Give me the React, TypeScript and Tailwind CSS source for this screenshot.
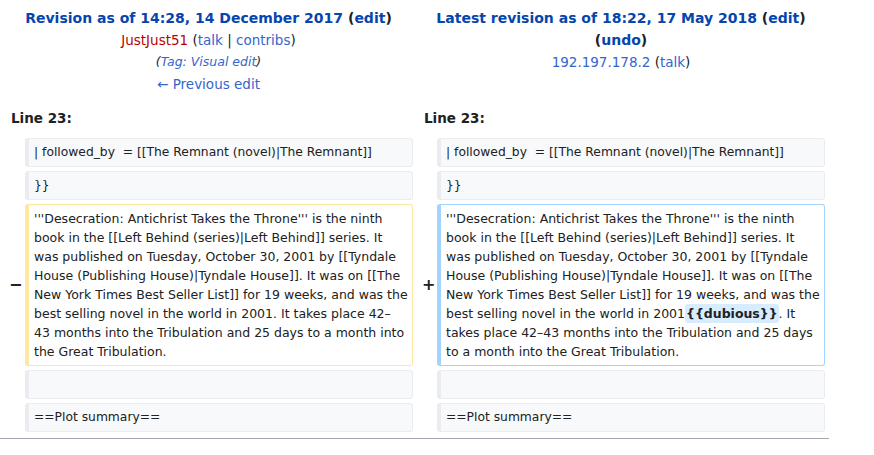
import React from 'react';

const font = { fontFamily: '"DejaVu Sans", sans-serif' };

const oldLines = [
  "'''Desecration: Antichrist Takes the Throne''' is the ninth",
  'book in the [[Left Behind (series)|Left Behind]] series. It',
  'was published on Tuesday, October 30, 2001 by [[Tyndale',
  'House (Publishing House)|Tyndale House]]. It was on [[The',
  'New York Times Best Seller List]] for 19 weeks, and was the',
  'best selling novel in the world in 2001. It takes place 42–',
  '43 months into the Tribulation and 25 days to a month into',
  'the Great Tribulation.',
];

const newLines: React.ReactNode[] = [
  "'''Desecration: Antichrist Takes the Throne''' is the ninth",
  'book in the [[Left Behind (series)|Left Behind]] series. It',
  'was published on Tuesday, October 30, 2001 by [[Tyndale',
  'House (Publishing House)|Tyndale House]]. It was on [[The',
  'New York Times Best Seller List]] for 19 weeks, and was the',
  <>
    best selling novel in the world in 2001
    <span className="bg-[#d8ecff] font-bold rounded-[3px] px-px py-[2px]">{'{{dubious}}'}</span>. It
  </>,
  'takes place 42–43 months into the Tribulation and 25 days',
  'to a month into the Great Tribulation.',
];

const Context: React.FC<{ children?: React.ReactNode }> = ({ children }) => (
  <td className="bg-[#f8f9fa] border border-[#eaecf0] border-l-4 rounded-[3px] px-[5px] py-[4px] text-[12.3px] leading-[19px] text-[#202122] align-top whitespace-pre">
    {children ?? <br />}
  </td>
);

const App: React.FC = () => {
  return (
    <div className="bg-white min-h-[455px] w-[874px] text-[#202122]" style={font}>
      <table className="w-[829px] table-fixed border-separate border-spacing-[4px]">
        <colgroup>
          <col className="w-[17px]" />
          <col />
          <col className="w-[16px]" />
          <col />
        </colgroup>
        <tbody>
          <tr className="align-top text-center">
            <td colSpan={2} className="pt-[3px] pb-[4px] leading-[22px]">
              <div className="text-[14px] font-bold">
                <span className="text-[#0645ad]">Revision as of 14:28, 14 December 2017</span>{' '}
                (<span className="text-[#0645ad]">edit</span>)
              </div>
              <div className="text-[13.5px]">
                <span className="text-[#ba0000]">JustJust51</span> (
                <span className="text-[#3366cc]">talk</span> | <span className="text-[#3366cc]">contribs</span>)
              </div>
              <div className="text-[12.5px] italic">
                (<span className="text-[#3366cc]">Tag: Visual edit</span>)
              </div>
              <div className="text-[13.5px] text-[#3366cc]">← Previous edit</div>
            </td>
            <td colSpan={2} className="pt-[3px] pb-[4px] leading-[22px]">
              <div className="text-[14px] font-bold">
                <span className="text-[#0645ad]">Latest revision as of 18:22, 17 May 2018</span>{' '}
                (<span className="text-[#0645ad]">edit</span>)
              </div>
              <div className="text-[14px] font-bold">
                (<span className="text-[#0645ad]">undo</span>)
              </div>
              <div className="text-[13.5px]">
                <span className="text-[#3366cc]">192.197.178.2</span> (<span className="text-[#3366cc]">talk</span>)
              </div>
            </td>
          </tr>
          <tr>
            <td colSpan={2} className="h-[31px] px-[7px] text-[13.5px] font-bold">Line 23:</td>
            <td colSpan={2} className="h-[31px] px-[7px] text-[13.5px] font-bold">Line 23:</td>
          </tr>
          <tr>
            <td />
            <Context>{'| followed_by  = [[The Remnant (novel)|The Remnant]]'}</Context>
            <td />
            <Context>{'| followed_by  = [[The Remnant (novel)|The Remnant]]'}</Context>
          </tr>
          <tr>
            <td />
            <Context>{'}}'}</Context>
            <td />
            <Context>{'}}'}</Context>
          </tr>
          <tr>
            <td className="text-left align-middle text-[16px] font-bold pl-[5px]">−</td>
            <td className="bg-white border border-[#fee7a0] border-l-4 border-l-[#fee7a0] rounded-[3px] px-[5px] py-[4px] text-[12.5px] leading-[19px] align-top whitespace-nowrap">
              {oldLines.map((l, i) => (
                <div key={i}>{l}</div>
              ))}
            </td>
            <td className="text-left align-middle text-[16px] font-bold pl-[5px]">+</td>
            <td className="bg-white border border-[#a3d3ff] border-l-4 border-l-[#a3d3ff] rounded-[3px] px-[5px] py-[4px] text-[12.5px] leading-[19px] align-top whitespace-nowrap">
              {newLines.map((l, i) => (
                <div key={i}>{l}</div>
              ))}
            </td>
          </tr>
          <tr>
            <td />
            <Context />
            <td />
            <Context />
          </tr>
          <tr>
            <td />
            <Context>==Plot summary==</Context>
            <td />
            <Context>==Plot summary==</Context>
          </tr>
        </tbody>
      </table>
      <div className="w-[829px] h-px bg-[#a2a9b1] mt-[2px]" />
    </div>
  );
};

export default App;
